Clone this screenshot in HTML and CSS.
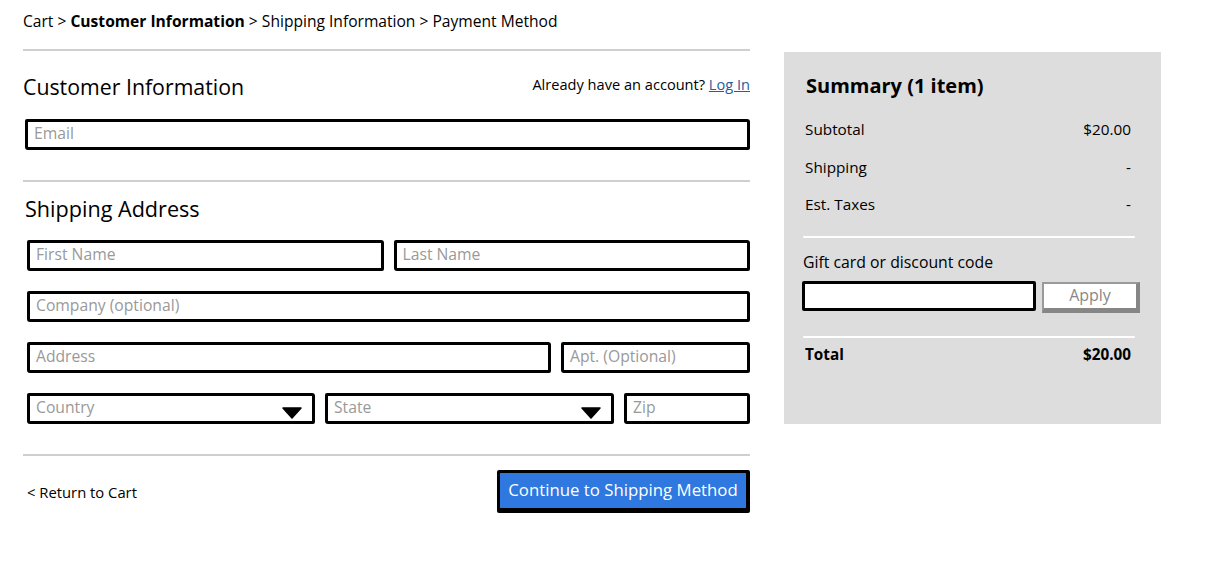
FILE: index.html
```html
<!DOCTYPE html>
<html lang="en">
<head>
<meta charset="utf-8">
<title>Checkout - Customer Information</title>
<link rel="stylesheet" href="styles.css">
</head>
<body>
<div class="page">
  <main class="main">
    <nav class="crumbs">Cart &gt; <b>Customer Information</b> &gt; Shipping Information &gt; Payment Method</nav>
    <hr class="rule rule-top">
    <div class="head-row">
      <h1 class="title">Customer Information</h1>
      <div class="account">Already have an account? <a href="#" class="link">Log In</a></div>
    </div>
    <div class="field field-email"><span class="ph">Email</span></div>
    <hr class="rule rule-mid">
    <h2 class="subtitle">Shipping Address</h2>
    <div class="rows">
      <div class="row">
        <div class="field grow"><span class="ph">First Name</span></div>
        <div class="field grow"><span class="ph">Last Name</span></div>
      </div>
      <div class="row">
        <div class="field grow"><span class="ph">Company (optional)</span></div>
      </div>
      <div class="row">
        <div class="field w-address"><span class="ph">Address</span></div>
        <div class="field grow"><span class="ph">Apt. (Optional)</span></div>
      </div>
      <div class="row">
        <div class="field select w-country"><span class="ph">Country</span>
          <svg class="caret" width="20" height="12" viewBox="0 0 20 12"><path d="M1 1 L19 1 L10 11 Z" fill="#000" stroke="#000" stroke-width="1.5" stroke-linejoin="round"/></svg>
        </div>
        <div class="field select w-state"><span class="ph">State</span>
          <svg class="caret" width="20" height="12" viewBox="0 0 20 12"><path d="M1 1 L19 1 L10 11 Z" fill="#000" stroke="#000" stroke-width="1.5" stroke-linejoin="round"/></svg>
        </div>
        <div class="field grow"><span class="ph">Zip</span></div>
      </div>
    </div>
    <hr class="rule rule-bottom">
    <div class="foot">
      <a href="#" class="back">&lt; Return to Cart</a>
      <button class="primary" type="button">Continue to Shipping Method</button>
    </div>
  </main>
  <aside class="summary">
    <h2 class="sum-title">Summary (1 item)</h2>
    <div class="sum-lines">
      <div class="sum-row"><span>Subtotal</span><span>$20.00</span></div>
      <div class="sum-row"><span>Shipping</span><span>-</span></div>
      <div class="sum-row"><span>Est. Taxes</span><span>-</span></div>
    </div>
    <hr class="wline wline-1">
    <div class="gift-label">Gift card or discount code</div>
    <div class="gift-row">
      <div class="gift-input"></div>
      <button class="apply" type="button">Apply</button>
    </div>
    <hr class="wline wline-2">
    <div class="sum-row total"><span>Total</span><span>$20.00</span></div>
  </aside>
</div>
</body>
</html>
```

FILE: styles.css
```css
* { box-sizing: border-box; }
html, body { margin: 0; padding: 0; background: #fff; }
body {
  font-family: "Open Sans", "Noto Sans", sans-serif;
  color: #000;
}
.page {
  display: flex;
  align-items: flex-start;
  gap: 34px;
  padding-left: 23px;
}
.main {
  width: 727px;
  padding-top: 11px;
}
.crumbs {
  font-size: 15.6px;
  line-height: 20px;
  height: 20px;
  white-space: nowrap;
}
.crumbs b { font-weight: 700; }
.rule {
  border: 0;
  height: 2px;
  background: #cfcfcf;
  margin: 0;
}
.rule-top { margin-top: 18px; }
.head-row {
  margin-top: 21px;
  height: 30px;
  display: flex;
  align-items: center;
  justify-content: space-between;
}
.title {
  margin: 0;
  font-size: 21.3px;
  font-weight: 400;
  line-height: 30px;
}
.account {
  font-size: 14.6px;
  line-height: 20px;
  margin-top: -6px;
}
.link { color: #2a5d9c; text-decoration: underline; }
.field {
  height: 31px;
  border: 3px solid #000;
  border-radius: 2px 3px 2px 3px;
  background: #fff;
  display: flex;
  align-items: center;
  padding-left: 6px;
  padding-right: 8px;
}
.ph {
  color: #999;
  font-size: 15.7px;
  line-height: 20px;
  margin-top: -4px;
}
.field-email { margin-top: 17px; margin-left: 2px; }
.rule-mid { margin-top: 30px; }
.subtitle {
  margin: 13px 0 0 2px;
  font-size: 21.6px;
  font-weight: 400;
  line-height: 28px;
}
.rows {
  margin-top: 17px;
  margin-left: 4px;
  display: flex;
  flex-direction: column;
  gap: 20px;
}
.row {
  display: flex;
  gap: 10px;
}
.grow { flex: 1; }
.w-address { width: 524px; }
.w-country { width: 288px; }
.w-state { width: 289px; }
.select { justify-content: space-between; padding-right: 10px; }
.caret { margin-top: 8px; }
.rule-bottom { margin-top: 30px; }
.foot {
  margin-top: 14px;
  display: flex;
  justify-content: space-between;
  align-items: center;
}
.back {
  color: #000;
  text-decoration: none;
  font-size: 14.8px;
  margin-left: 4px;
  line-height: 20px;
}
.primary {
  width: 253px;
  height: 43px;
  background: #2e78df;
  color: #fff;
  font-family: inherit;
  font-size: 16.8px;
  border: 3px solid #000;
  border-right-width: 4px;
  border-bottom-width: 5px;
  border-radius: 2px;
  padding: 0 0 2px;
  cursor: pointer;
}
.summary {
  margin-top: 52px;
  width: 377px;
  height: 372px;
  background: #dddddd;
  padding: 20px 30px 0 19px;
}
.sum-title {
  margin: 0 0 0 3px;
  font-size: 20px;
  font-weight: 700;
  line-height: 28px;
}
.sum-lines {
  margin-top: 19px;
  display: flex;
  flex-direction: column;
  gap: 17.5px;
}
.sum-row {
  display: flex;
  justify-content: space-between;
  font-size: 15.3px;
  line-height: 20px;
  padding-left: 2px;
}
.wline {
  border: 0;
  height: 2px;
  background: #fff;
  margin: 0 -4px 0 0;
  border-radius: 1px;
}
.wline-1 { margin-top: 22px; }
.gift-label {
  margin-top: 14px;
  font-size: 15.8px;
  line-height: 20px;
}
.gift-row {
  margin-top: 9px;
  display: flex;
  gap: 6px;
  margin-left: -1px;
}
.gift-input {
  width: 234px;
  height: 30px;
  background: #fff;
  border: 3px solid #000;
  border-radius: 2px;
}
.apply {
  margin-top: 1px;
  width: 98px;
  height: 31px;
  background: #fff;
  border: 2px solid #9a9a9a;
  border-right: 4px solid #868686;
  border-bottom: 5px solid #868686;
  color: #888;
  font-family: inherit;
  font-size: 16px;
  padding: 0 0 2px;
  margin-right: -9px;
}
.wline-2 { margin-top: 23px; }
.total {
  margin-top: 6px;
  font-weight: 700;
}
```
